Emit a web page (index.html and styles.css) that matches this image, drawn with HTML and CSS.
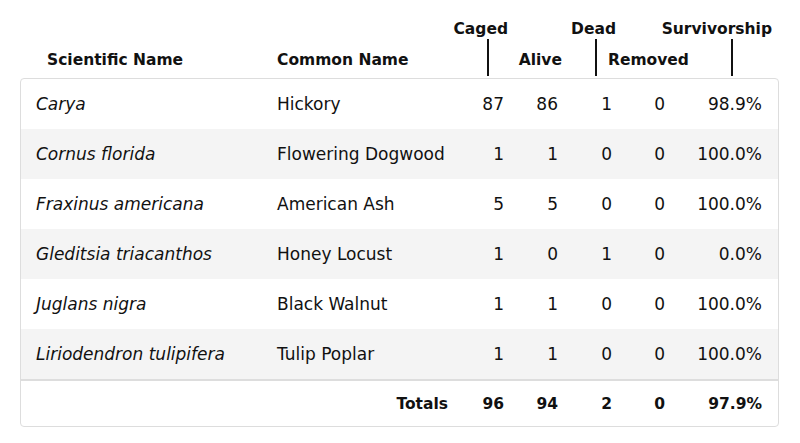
FILE: index.html
```html
<!DOCTYPE html>
<html>
<head>
<meta charset="utf-8">
<link rel="stylesheet" href="styles.css">
</head>
<body>
<div class="page">
  <div class="head">
    <div class="h-top h-caged">Caged</div>
    <div class="h-top h-dead">Dead</div>
    <div class="h-top h-surv">Survivorship</div>
    <div class="h-bot h-sci">Scientific Name</div>
    <div class="h-bot h-common">Common Name</div>
    <div class="tick tick-caged"></div>
    <div class="h-bot h-alive">Alive</div>
    <div class="tick tick-dead"></div>
    <div class="h-bot h-removed">Removed</div>
    <div class="tick tick-surv"></div>
  </div>
  <div class="box">
    <div class="row">
      <div class="sci">Carya</div><div class="common">Hickory</div>
      <div class="num">87</div><div class="num">86</div><div class="num">1</div><div class="num">0</div><div class="num">98.9%</div>
    </div>
    <div class="row alt">
      <div class="sci">Cornus florida</div><div class="common">Flowering Dogwood</div>
      <div class="num">1</div><div class="num">1</div><div class="num">0</div><div class="num">0</div><div class="num">100.0%</div>
    </div>
    <div class="row">
      <div class="sci">Fraxinus americana</div><div class="common">American Ash</div>
      <div class="num">5</div><div class="num">5</div><div class="num">0</div><div class="num">0</div><div class="num">100.0%</div>
    </div>
    <div class="row alt">
      <div class="sci">Gleditsia triacanthos</div><div class="common">Honey Locust</div>
      <div class="num">1</div><div class="num">0</div><div class="num">1</div><div class="num">0</div><div class="num">0.0%</div>
    </div>
    <div class="row">
      <div class="sci">Juglans nigra</div><div class="common">Black Walnut</div>
      <div class="num">1</div><div class="num">1</div><div class="num">0</div><div class="num">0</div><div class="num">100.0%</div>
    </div>
    <div class="row alt">
      <div class="sci">Liriodendron tulipifera</div><div class="common">Tulip Poplar</div>
      <div class="num">1</div><div class="num">1</div><div class="num">0</div><div class="num">0</div><div class="num">100.0%</div>
    </div>
    <div class="row total">
      <div class="sci"></div><div class="label">Totals</div>
      <div class="num">96</div><div class="num">94</div><div class="num">2</div><div class="num">0</div><div class="num">97.9%</div>
    </div>
  </div>
</div>
</body>
</html>
```

FILE: styles.css
```css
html, body {
  margin: 0;
  padding: 0;
  background: #fff;
}
body {
  font-family: "DejaVu Sans", Verdana, sans-serif;
  color: #111;
}
.page {
  padding: 18px 21px 0 20px;
  width: 759px;
}
.head {
  display: grid;
  grid-template-columns: 240px 194px 49px 54px 54px 53px 97px 16px;
  grid-template-rows: 21px 39px;
  margin-left: 1px;
  font-weight: bold;
  font-size: 15.5px;
  line-height: 21px;
}
.h-top { grid-row: 1; white-space: nowrap; padding-top: 1px; }
.h-bot { grid-row: 2; align-self: end; margin-bottom: 7px; white-space: nowrap; }
.h-caged { grid-column: 3; justify-self: end; margin-right: -4px; }
.h-dead { grid-column: 5; justify-self: end; margin-right: -4px; }
.h-surv { grid-column: 7 / 9; justify-self: end; margin-right: 6px; }
.h-sci { grid-column: 1; margin-left: 26px; }
.h-common { grid-column: 2; margin-left: 16px; }
.h-alive { grid-column: 4; justify-self: end; margin-right: -4px; }
.h-removed { grid-column: 6 / 8; justify-self: start; margin-left: -4px; }
.tick {
  grid-row: 2;
  width: 2px;
  height: 37px;
  margin-top: 0;
  background: #111;
}
.tick-caged { grid-column: 3; margin-left: 32px; }
.tick-dead { grid-column: 5; margin-left: 37px; }
.tick-surv { grid-column: 7; margin-left: 66px; }

.box {
  border: 1px solid #ddd;
  border-radius: 4px;
  overflow: hidden;
  font-size: 17px;
}
.row {
  display: grid;
  grid-template-columns: 240px 194px 49px 54px 54px 53px 97px;
  padding-right: 16px;
  height: 50px;
  align-items: center;
  white-space: nowrap;
}
.row.alt { background: #f4f4f4; }
.sci { font-style: italic; padding-left: 15px; }
.common { padding-left: 16px; }
.num { text-align: right; }
.total {
  height: 45px;
  border-top: 2px solid #ddd;
  font-weight: bold;
  font-size: 15.5px;
}
.label { text-align: right; padding-right: 7px; }
```
